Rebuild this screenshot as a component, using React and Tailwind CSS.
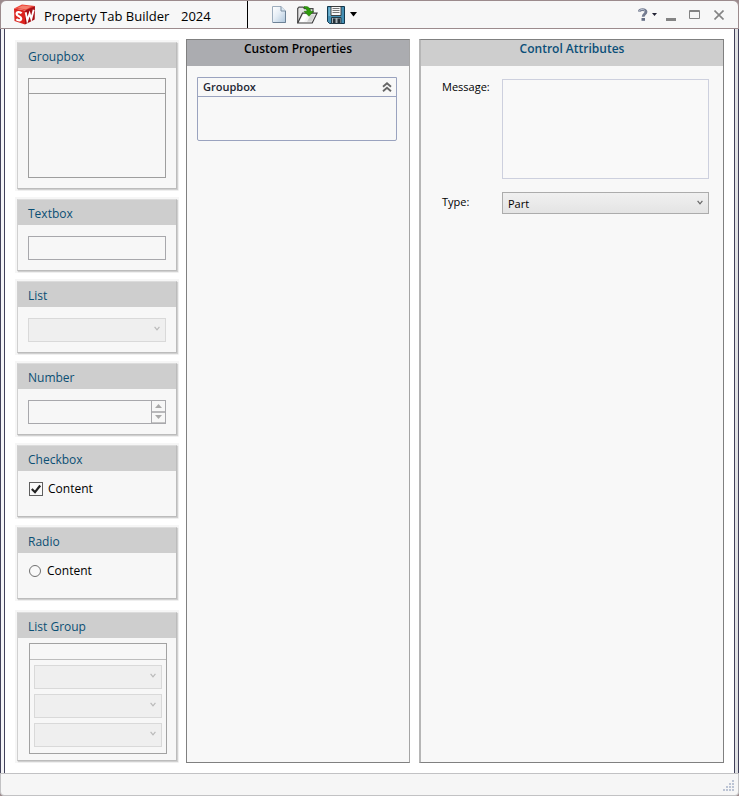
import React from 'react';

function Caret({ className }) {
  return (
    <svg className={className} viewBox="0 0 6 5" fill="none" stroke="currentColor" strokeWidth="1.2" aria-hidden="true">
      <path d="M0.6 0.8 3 3.8 5.4 0.8" />
    </svg>
  );
}

function Card({ title, className, children }) {
  return (
    <section className={`flex flex-col border border-t-[#dcdcdc] border-r-[#bcbcbc] border-b-[#bcbcbc] border-l-[#d0d0d0] bg-[#f7f7f7] shadow-[1px_1px_1px_#d0d0d0,0_0_0_2px_#f6f6f6] ${className}`}>
      <h2 className="h-[25px] shrink-0 bg-[#cecece] pl-[10px] text-[12px] leading-[28px] text-[#0b4f74]">{title}</h2>
      {children}
    </section>
  );
}

function DisabledSelect({ label }) {
  return (
    <div className="grid items-center">
      <select disabled aria-label={label} className="col-start-1 row-start-1 h-[24px] w-full appearance-none border border-[#d9d9d9] bg-[#efefef] opacity-100" />
      <Caret className="pointer-events-none col-start-1 row-start-1 mr-[6px] mb-[4px] h-[5px] w-[6px] justify-self-end text-[#b9b9b9]" />
    </div>
  );
}

function Logo() {
  return (
    <svg className="mb-[1px] h-[21px] w-[23px]" viewBox="0 0 23 21" aria-hidden="true">
      <path d="M1 4.500 9 0.500 22 2 14 6.500z" fill="#ee4034" />
      <path d="M4 4 9.500 1.400 18.500 2.500 13 5.400z" fill="#f4806f" />
      <path d="M1 4.500 12 6.500V20.500L1.500 17z" fill="#dc241f" />
      <path d="M12 6.500 22 2 21.700 15.500 12 20.500z" fill="#a81016" />
      <path d="M8.600 9.300C7 7.500 3.600 7.600 3.600 9.900c0 2.400 4.600 2.200 4.600 4.600 0 2.300-3 2.300-4.900 0.600" fill="none" stroke="#fff" strokeWidth="2.200" />
      <path d="M12.700 8.300 14.300 16.500 16.600 9.500 18.300 14.800 20.700 5.800" fill="none" stroke="#fff" strokeWidth="1.900" />
    </svg>
  );
}

function NewIcon() {
  return (
    <svg className="h-[17px] w-[14px]" viewBox="0 0 14 17" aria-hidden="true">
      <defs>
        <linearGradient id="page" x1="0" y1="0" x2="1" y2="1">
          <stop offset="0" stopColor="#fff" />
          <stop offset="0.450" stopColor="#e6eef6" />
          <stop offset="1" stopColor="#afc7dc" />
        </linearGradient>
      </defs>
      <path d="M0.500 0.500H9L13.500 5V16.500H0.500z" fill="url(#page)" stroke="#9dadbd" />
      <path d="M9 0.500V5h4.500" fill="#dce8f2" stroke="#7d90a3" />
      <path d="M1 16.500h12.500V5" fill="none" stroke="#6d8296" />
    </svg>
  );
}

function OpenIcon() {
  return (
    <svg className="h-[18px] w-[21px]" viewBox="0 0 21 18" aria-hidden="true">
      <path d="M0.700 17V2.500L2 1.200h4l1.500 1.500H16V8" fill="#e4e4e4" stroke="#4b4b4b" strokeWidth="1.200" />
      <path d="M0.700 17 5.500 7.200H20L15.200 17z" fill="#f5f5f5" stroke="#3e3e3e" strokeWidth="1.200" />
      <path d="M3 15.800 6.500 8.500H11L7 15.800z" fill="#fff" />
      <path d="M10 15.800 14 8.500H18L14.500 15.800z" fill="#d4d4d4" />
      <path d="M7 0.500C11 0 13.500 2 13.600 5.300H16.500L12 10.300 7 5.300H10C10 3.300 9 2.300 7 2z" fill="#2f9c0c" stroke="#217306" strokeWidth="0.600" />
    </svg>
  );
}

function SaveIcon() {
  return (
    <svg className="h-[18px] w-[18px]" viewBox="0 0 18 18" aria-hidden="true">
      <path d="M0.500 0.500H17.500V17.500H2.500L0.500 15.500z" fill="#4590b4" stroke="#12384e" />
      <path d="M1.500 1.500H4V10H1.500z" fill="#72b5d2" />
      <path d="M4 0.500H14V9.500H4z" fill="#f8f8f8" stroke="#333" strokeWidth="0.900" />
      <path d="M5.500 2.500h7M5.500 4.500h7M5.500 6.500h7" stroke="#777" />
      <path d="M4.500 11.500h9.500v6H4.500z" fill="#a7b1b6" stroke="#253b47" />
      <path d="M6 12.500h2.500V17H6zM10.500 12.500H13V17h-2.500z" fill="#273139" />
    </svg>
  );
}

function HelpIcon() {
  return (
    <svg className="h-[13px] w-[10px]" viewBox="0 0 10 13" aria-hidden="true">
      <path d="M1.300 3.700C1.500 1 8 0.800 8 3.800 8 6 5.200 6 5.200 8.800" fill="none" stroke="#737b90" strokeWidth="2.800" />
      <path d="M1.300 3C2 0.900 6.200 0.900 6.800 2.600" fill="none" stroke="#b9c0cf" strokeWidth="1" />
      <path d="M3.500 10h3.500v2.800h-3.500z" fill="#656e84" />
    </svg>
  );
}

function TitleBar() {
  return (
    <header className="flex h-[29px] shrink-0 items-center rounded-t-[6px] border border-[#9c8b8d] bg-[#f7f7f7] pl-[12px] pr-[14px]">
      <Logo />
      <h1 className="ml-[8px] flex w-[204px] items-center self-stretch border-r border-black pt-[4px] text-[13px] text-black">
        <span className="w-[137px]">Property Tab Builder</span>
        <span>2024</span>
      </h1>
      <nav className="ml-[24px] flex items-center" aria-label="File">
        <button aria-label="New"><NewIcon /></button>
        <button aria-label="Open" className="ml-[11px]"><OpenIcon /></button>
        <button aria-label="Save" className="ml-[9px]"><SaveIcon /></button>
        <button aria-label="Save options" className="ml-[5px]">
          <svg className="h-[5px] w-[7px]" viewBox="0 0 7 5"><path d="M0 0h7L3.500 4.500z" fill="#000" /></svg>
        </button>
      </nav>
      <div className="ml-auto flex items-center">
        <button aria-label="Help"><HelpIcon /></button>
        <button aria-label="Help options" className="ml-[4px]">
          <svg className="h-[3px] w-[5px]" viewBox="0 0 5 3"><path d="M0 0h5L2.500 3z" fill="#223" /></svg>
        </button>
        <button aria-label="Minimize" className="ml-[9px]">
          <svg className="h-[12px] w-[10px]" viewBox="0 0 10 12"><path d="M0 9h10v3H0z" fill="#848484" /></svg>
        </button>
        <button aria-label="Maximize" className="ml-[13px]">
          <svg className="h-[9px] w-[11px]" viewBox="0 0 11 9"><path d="M0.500 0.500h10v8h-10zM0 1.500h11" fill="none" stroke="#848484" /></svg>
        </button>
        <button aria-label="Close" className="ml-[14px]">
          <svg className="h-[10px] w-[10px]" viewBox="0 0 10 10"><path d="M0.500 0.500 9.500 9.500M9.500 0.500 0.500 9.500" stroke="#848484" strokeWidth="1.600" /></svg>
        </button>
      </div>
    </header>
  );
}

function Palette() {
  return (
    <aside className="flex w-[160px] shrink-0 flex-col gap-[10px] pt-[3px]">
      <Card title="Groupbox" className="h-[147px]">
        <div className="mx-[10px] mt-[10px] h-[100px] border border-[#9e9e9e]">
          <div className="h-[15px] border-b border-[#9e9e9e]" />
        </div>
      </Card>
      <Card title="Textbox" className="h-[72px]">
        <input aria-label="Textbox" readOnly className="mx-[10px] mt-[11px] h-[24px] border border-[#a8a8ac] bg-[#f7f7f7]" />
      </Card>
      <Card title="List" className="h-[72px]">
        <div className="mx-[10px] mt-[11px]"><DisabledSelect label="List" /></div>
      </Card>
      <Card title="Number" className="h-[72px]">
        <div className="mx-[10px] mt-[11px] flex h-[24px] border border-[#a8a8ac]">
          <input aria-label="Number" readOnly className="min-w-0 flex-1 bg-[#f7f7f7]" />
          <div className="flex w-[14px] flex-col border-l border-[#a8a8ac]">
            <button aria-label="Increase" className="flex flex-1 items-center justify-center border-b-2 border-[#b8b8ba]">
              <svg className="h-[4px] w-[7px]" viewBox="0 0 7 4"><path d="M0 4h7L3.500 0z" fill="#a9a9a9" /></svg>
            </button>
            <button aria-label="Decrease" className="flex flex-1 items-center justify-center border-b border-[#c4c4c4]">
              <svg className="h-[4px] w-[7px]" viewBox="0 0 7 4"><path d="M0 0h7L3.500 4z" fill="#a9a9a9" /></svg>
            </button>
          </div>
        </div>
      </Card>
      <Card title="Checkbox" className="h-[72px]">
        <label className="mt-[9px] ml-[11px] flex items-center gap-[5px] text-[12px] leading-[18px] text-black">
          <span className="grid">
            <input type="checkbox" defaultChecked className="peer col-start-1 row-start-1 size-[14px] appearance-none border border-[#5f5f5f] bg-[#f9f9f9]" />
            <svg className="pointer-events-none invisible col-start-1 row-start-1 size-[14px] peer-checked:visible" viewBox="0 0 14 14" fill="none" stroke="#222" strokeWidth="2.200">
              <path d="M2.800 7 6 10.200 11.200 3.500" />
            </svg>
          </span>
          Content
        </label>
      </Card>
      <Card title="Radio" className="h-[72px]">
        <label className="mt-[9px] ml-[11px] flex items-center gap-[6px] text-[12px] leading-[18px] text-black">
          <input type="radio" name="sample" className="size-[12px] appearance-none rounded-full border border-[#707070] bg-[#f9f9f9] checked:border-4" />
          Content
        </label>
      </Card>
      <Card title="List Group" className="mt-[3px] h-[149px]">
        <div className="mr-[9px] ml-[11px] mt-[5px] flex h-[111px] flex-col border border-[#a2a2a2]">
          <div className="h-[16px] shrink-0 border-b border-[#bdbdbd]" />
          <div className="flex flex-col gap-[5px] px-[4px] pt-[5px]">
            <DisabledSelect label="First list" />
            <DisabledSelect label="Second list" />
            <DisabledSelect label="Third list" />
          </div>
        </div>
      </Card>
    </aside>
  );
}

function CustomProperties() {
  return (
    <main className="w-[224px] shrink-0 border border-[#808080] border-r-[#a5a5a5] bg-[#f8f8f8]">
      <h2 className="h-[26px] bg-[#abacb0] text-center text-[12px] leading-[18px] font-semibold text-black">Custom Properties</h2>
      <section className="ml-[10px] mt-[11px] mr-[12px] h-[64px] rounded-b-[2px] border border-[#9aa3bf]">
        <div className="flex h-[19px] items-center justify-between border-b border-[#9aa3bf] pr-[4px] pl-[5px]">
          <h3 className="text-[11px] leading-[18px] font-semibold text-[#222633]">Groupbox</h3>
          <button aria-label="Collapse group">
            <svg className="h-[10px] w-[10px]" viewBox="0 0 10 10" fill="none" stroke="#666" strokeWidth="1.800">
              <path d="M1 4.700 5 1.200 9 4.700M1 9.200 5 5.700 9 9.200" />
            </svg>
          </button>
        </div>
      </section>
    </main>
  );
}

function ControlAttributes() {
  return (
    <section className="min-w-0 flex-1 border border-[#808080] border-l-2 border-l-[#b6b6b6] bg-[#f8f8f8]">
      <h2 className="h-[26px] bg-[#cecece] text-center text-[12px] leading-[18px] font-semibold text-[#0b4f78]">Control Attributes</h2>
      <form className="grid grid-cols-[60px_1fr] gap-y-[13px] pt-[13px] pr-[14px] pl-[21px] text-[11px] text-black">
        <label htmlFor="message" className="leading-[16px]">Message:</label>
        <textarea id="message" className="h-[100px] w-full resize-none border border-[#cdd0de] bg-[#f9f9f9]" />
        <label htmlFor="type" className="pt-[2px] leading-[16px]">Type:</label>
        <div className="grid items-center">
          <select id="type" className="col-start-1 row-start-1 h-[22px] w-full appearance-none border border-[#acacac] bg-linear-to-b from-[#f0f0f0] to-[#e4e4e4] pt-[2px] pl-[5px] text-[11px]">
            <option>Part</option>
            <option>Assembly</option>
            <option>Drawing</option>
          </select>
          <Caret className="pointer-events-none col-start-1 row-start-1 mr-[6px] mb-[1px] h-[5px] w-[6px] justify-self-end text-[#666]" />
        </div>
      </form>
    </section>
  );
}

function StatusBar() {
  return (
    <footer className="flex h-[23px] shrink-0 items-end justify-end rounded-b-[4px] border border-[#c2c2c4] bg-[#f6f6f6] pr-[3px] pb-[3px]">
      <svg className="h-[12px] w-[12px]" viewBox="0 0 12 12" fill="#bcc4d4" aria-hidden="true">
        <path d="M9 0h2v2H9zM9 3h2v2H9zM9 6h2v2H9zM9 9h2v2H9zM6 3h2v2H6zM6 6h2v2H6zM6 9h2v2H6zM3 6h2v2H3zM3 9h2v2H3zM0 9h2v2H0z" />
      </svg>
    </footer>
  );
}

export default function App() {
  return (
    <div className="flex min-h-screen flex-col bg-[#9c8b8d] font-['Open_Sans','Noto_Sans',sans-serif]">
      <TitleBar />
      <div className="flex flex-1 border-x border-[#41415a] bg-[#dfe0e2]">
        <div className="w-[3px] shrink-0 bg-[#f4f4f6]" />
        <div className="flex min-w-0 flex-1 border-x border-[#41415a] bg-white py-[10px] pr-[10px] pl-[12px]">
          <Palette />
          <div className="ml-[9px] flex min-w-0 flex-1 gap-[9px]">
            <CustomProperties />
            <ControlAttributes />
          </div>
        </div>
        <div className="w-[3px] shrink-0" />
      </div>
      <StatusBar />
    </div>
  );
}
